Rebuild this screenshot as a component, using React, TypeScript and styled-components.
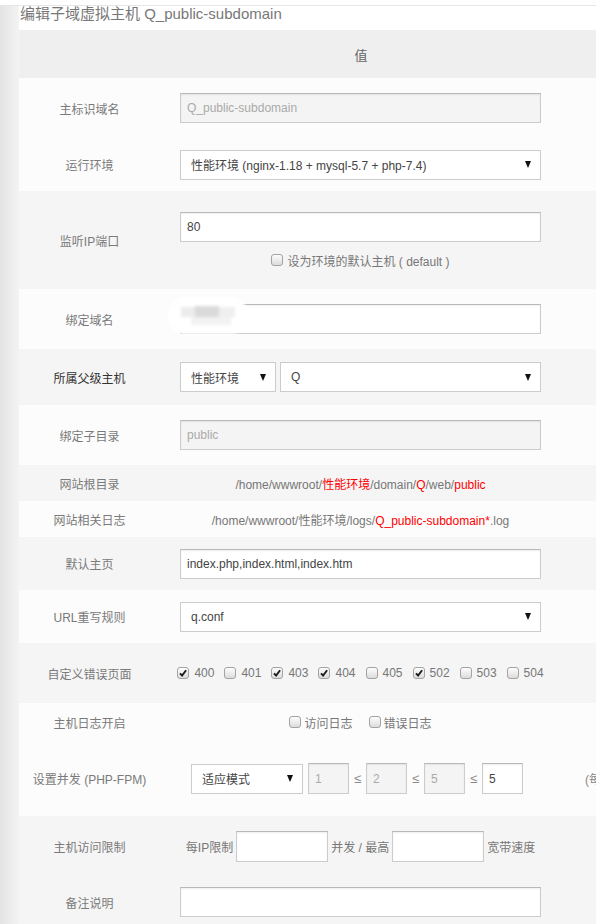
import React from "react";
import styled, { createGlobalStyle } from "styled-components";

const FONT = `"Liberation Sans", Arial, "Noto Sans CJK SC", sans-serif`;

const GlobalStyle = createGlobalStyle`
  html, body {
    margin: 0;
    padding: 0;
    background: #fff;
    overflow: hidden;
  }
  body {
    font-family: ${FONT};
    font-size: 12px;
    color: #777;
  }
`;

const Page = styled.div`
  width: 596px;
  height: 924px;
  overflow: hidden;
  display: flex;
  flex-direction: column;
`;

const TopEdge = styled.div`
  flex-shrink: 0;
  height: 5px;
  border-bottom: 1px solid #e6e6e6;
`;

const Body = styled.div`
  display: flex;
  flex: 1;
  min-height: 0;
`;

const Gutter = styled.div`
  flex-shrink: 0;
  width: 19px;
  background: linear-gradient(to right, #e3e3e3, #f3f3f3);
`;

const Main = styled.main`
  flex: 1;
  min-width: 0;
  overflow: hidden;
`;

const Title = styled.h3`
  margin: 0;
  height: 24px;
  padding-left: 1px;
  font-size: 15px;
  line-height: 16px;
  font-weight: normal;
  color: #777;
  white-space: nowrap;
`;

const Grid = styled.table`
  width: 780px;
  table-layout: fixed;
  border-collapse: collapse;
  border-spacing: 0;
`;

const HeadRow = styled.tr`
  height: 48px;
  background: #efefef;
`;

const HeadCell = styled.th`
  padding: 0;
  font-size: 13px;
  font-weight: normal;
  color: #666;
`;

const Row = styled.tr<{ $shade?: boolean; $h: number }>`
  height: ${(p) => p.$h}px;
  background: ${(p) => (p.$shade ? "#f5f5f5" : "#fcfcfc")};
`;

const Label = styled.td<{ $dark?: boolean }>`
  padding: 0;
  text-align: center;
  white-space: nowrap;
  color: ${(p) => (p.$dark ? "#333" : "#7a7a7a")};
`;

const Value = styled.td`
  padding: 0 21px 0 20px;
`;

const Note = styled.td`
  padding: 0 0 0 23px;
  white-space: nowrap;
  overflow: hidden;
  color: #888;
`;

const TextInput = styled.input<{ $w?: number }>`
  box-sizing: border-box;
  display: block;
  width: ${(p) => (p.$w ? `${p.$w}px` : "100%")};
  height: ${(p) => (p.$w ? "31px" : "30px")};
  margin: 0;
  padding: 0 6px;
  border: 1px solid #ccc;
  border-top-color: #b8b8b8;
  border-radius: 0;
  box-shadow: inset 0 1px 2px rgba(0, 0, 0, 0.07);
  background: #fff;
  font: 12px ${FONT};
  color: #444;
  outline: none;
  flex: none;
  &:disabled {
    background: #f4f4f4;
    color: #aaa;
  }
`;

const Select = styled.div<{ $w?: number }>`
  box-sizing: border-box;
  display: flex;
  align-items: center;
  justify-content: space-between;
  width: ${(p) => (p.$w ? `${p.$w}px` : "auto")};
  flex: ${(p) => (p.$w ? "none" : "1")};
  height: 30px;
  padding: 0 9px 0 10px;
  border: 1px solid #ccc;
  background: #fff;
  color: #444;
  white-space: nowrap;
`;

const Caret = styled.span`
  width: 0;
  height: 0;
  border-left: 3px solid transparent;
  border-right: 3px solid transparent;
  border-top: 7px solid #111;
`;

const Pair = styled.div`
  display: flex;
  gap: 4px;
`;

const Field = styled.div`
  position: relative;
`;

/* soft mosaic laid over the start of the domain field */
const Smudge = styled.div`
  position: absolute;
  left: -9px;
  top: -4px;
  width: 74px;
  height: 31px;
  border-radius: 15px;
  background: #fff;
  box-shadow: 0 0 0 3px #fff;
  filter: blur(1.5px);
`;

const Tile = styled.span<{ $x: number; $y: number; $w: number; $h: number; $c: string }>`
  position: absolute;
  left: ${(p) => p.$x}px;
  top: ${(p) => p.$y}px;
  width: ${(p) => p.$w}px;
  height: ${(p) => p.$h}px;
  background: ${(p) => p.$c};
`;

const CheckLine = styled.div<{ $gap: number; $top?: number }>`
  display: flex;
  justify-content: center;
  align-items: center;
  gap: ${(p) => p.$gap}px;
  margin-top: ${(p) => p.$top ?? 0}px;
`;

const CheckItem = styled.label<{ $space: number }>`
  display: inline-flex;
  align-items: center;
  gap: ${(p) => p.$space}px;
  color: #777;
  white-space: nowrap;
`;

const Tick = styled.span`
  box-sizing: border-box;
  display: inline-flex;
  align-items: center;
  justify-content: center;
  width: 12px;
  height: 12px;
  border: 1px solid #a3a3a3;
  border-radius: 3px;
  background: linear-gradient(#fdfdfd, #dcdcdc);
`;

const Path = styled.div`
  text-align: center;
  white-space: nowrap;
  color: #777;
`;

const Red = styled.span`
  color: #f00;
`;

const Inline = styled.div<{ $gap: number; $center?: boolean; $pad?: number }>`
  display: flex;
  align-items: center;
  justify-content: ${(p) => (p.$center ? "center" : "flex-start")};
  gap: ${(p) => p.$gap}px;
  padding-left: ${(p) => p.$pad ?? 0}px;
  white-space: nowrap;
  color: #777;
`;

const Le = styled.span`
  width: 7px;
  color: #888;
  font-size: 13px;
  text-align: center;
`;

function Check({ on, space = 5, children }: { on?: boolean; space?: number; children: React.ReactNode }) {
  return (
    <CheckItem $space={space}>
      <Tick>
        {on && (
          <svg width="8" height="8" viewBox="0 0 8 8">
            <path d="M1 4.3 L3.1 6.5 L7.1 1.2" fill="none" stroke="#1c1c1c" strokeWidth="1.9" />
          </svg>
        )}
      </Tick>
      {children}
    </CheckItem>
  );
}

function Dropdown({ w, children }: { w?: number; children: React.ReactNode }) {
  return (
    <Select $w={w}>
      <span>{children}</span>
      <Caret />
    </Select>
  );
}

const errorPages: [string, boolean][] = [
  ["400", true],
  ["401", false],
  ["403", true],
  ["404", true],
  ["405", false],
  ["502", true],
  ["503", false],
  ["504", false],
];

export default function App() {
  return (
    <Page>
      <GlobalStyle />
      <TopEdge />
      <Body>
        <Gutter />
        <Main>
          <Title>编辑子域虚拟主机 Q_public-subdomain</Title>
          <Grid>
            <colgroup>
              <col style={{ width: 141 }} />
              <col style={{ width: 402 }} />
              <col style={{ width: 237 }} />
            </colgroup>
            <thead>
              <HeadRow>
                <HeadCell />
                <HeadCell>值</HeadCell>
                <HeadCell />
              </HeadRow>
            </thead>
            <tbody>
              <Row $h={60}>
                <Label>主标识域名</Label>
                <Value>
                  <TextInput disabled value="Q_public-subdomain" readOnly />
                </Value>
                <Note />
              </Row>
              <Row $h={53}>
                <Label>运行环境</Label>
                <Value>
                  <Dropdown>性能环境 (nginx-1.18 + mysql-5.7 + php-7.4)</Dropdown>
                </Value>
                <Note />
              </Row>
              <Row $h={98} $shade>
                <Label>监听IP端口</Label>
                <Value>
                  <TextInput value="80" readOnly />
                  <CheckLine $gap={0} $top={10}>
                    <Check space={4}>设为环境的默认主机 ( default )</Check>
                  </CheckLine>
                </Value>
                <Note />
              </Row>
              <Row $h={60}>
                <Label>绑定域名</Label>
                <Value>
                  <Field>
                    <TextInput value="" readOnly />
                    <Smudge>
                      <Tile $x={10} $y={7} $w={14} $h={10} $c="#ececec" />
                      <Tile $x={24} $y={6} $w={24} $h={11} $c="#dadada" />
                      <Tile $x={48} $y={7} $w={16} $h={10} $c="#efefef" />
                      <Tile $x={20} $y={17} $w={40} $h={8} $c="#f2f2f2" />
                    </Smudge>
                  </Field>
                </Value>
                <Note />
              </Row>
              <Row $h={56} $shade>
                <Label $dark>所属父级主机</Label>
                <Value>
                  <Pair>
                    <Dropdown w={96}>性能环境</Dropdown>
                    <Dropdown>Q</Dropdown>
                  </Pair>
                </Value>
                <Note />
              </Row>
              <Row $h={60}>
                <Label>绑定子目录</Label>
                <Value>
                  <TextInput disabled value="public" readOnly />
                </Value>
                <Note />
              </Row>
              <Row $h={36} $shade>
                <Label>网站根目录</Label>
                <Value>
                  <Path>
                    /home/wwwroot/<Red>性能环境</Red>/domain/<Red>Q</Red>/web/<Red>public</Red>
                  </Path>
                </Value>
                <Note />
              </Row>
              <Row $h={36}>
                <Label>网站相关日志</Label>
                <Value>
                  <Path>
                    /home/wwwroot/性能环境/logs/<Red>Q_public-subdomain*</Red>.log
                  </Path>
                </Value>
                <Note />
              </Row>
              <Row $h={53} $shade>
                <Label>默认主页</Label>
                <Value>
                  <TextInput value="index.php,index.html,index.htm" readOnly />
                </Value>
                <Note />
              </Row>
              <Row $h={53}>
                <Label>URL重写规则</Label>
                <Value>
                  <Dropdown>q.conf</Dropdown>
                </Value>
                <Note />
              </Row>
              <Row $h={60} $shade>
                <Label>自定义错误页面</Label>
                <Value>
                  <CheckLine $gap={10}>
                    {errorPages.map(([code, on]) => (
                      <Check key={code} on={on}>
                        {code}
                      </Check>
                    ))}
                  </CheckLine>
                </Value>
                <Note />
              </Row>
              <Row $h={38}>
                <Label>主机日志开启</Label>
                <Value>
                  <CheckLine $gap={16}>
                    <Check space={3}>访问日志</Check>
                    <Check space={3}>错误日志</Check>
                  </CheckLine>
                </Value>
                <Note />
              </Row>
              <Row $h={75}>
                <Label>设置并发 (PHP-FPM)</Label>
                <Value>
                  <Inline $gap={5} $pad={11}>
                    <Dropdown w={112}>适应模式</Dropdown>
                    <TextInput $w={41} disabled value="1" readOnly />
                    <Le>≤</Le>
                    <TextInput $w={41} disabled value="2" readOnly />
                    <Le>≤</Le>
                    <TextInput $w={41} disabled value="5" readOnly />
                    <Le>≤</Le>
                    <TextInput $w={41} value="5" readOnly />
                  </Inline>
                </Value>
                <Note>(每个子进程约占用 20M 内存)</Note>
              </Row>
              <Row $h={60} $shade>
                <Label>主机访问限制</Label>
                <Value>
                  <Inline $gap={3} $center>
                    <span>每IP限制</span>
                    <TextInput $w={92} value="" readOnly />
                    <span>并发 / 最高</span>
                    <TextInput $w={92} value="" readOnly />
                    <span>宽带速度</span>
                  </Inline>
                </Value>
                <Note />
              </Row>
              <Row $h={52} $shade>
                <Label>备注说明</Label>
                <Value>
                  <TextInput value="" readOnly />
                </Value>
                <Note />
              </Row>
            </tbody>
          </Grid>
        </Main>
      </Body>
    </Page>
  );
}
